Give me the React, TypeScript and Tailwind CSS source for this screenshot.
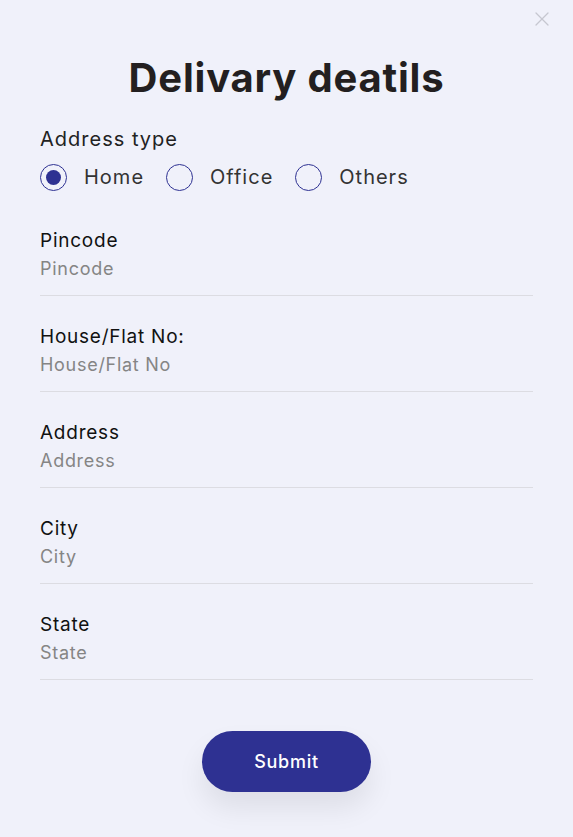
import { X } from "lucide-react";

const fields = [
  { label: "Pincode", placeholder: "Pincode" },
  { label: "House/Flat No:", placeholder: "House/Flat No" },
  { label: "Address", placeholder: "Address" },
  { label: "City", placeholder: "City" },
  { label: "State", placeholder: "State" },
];

const types = ["Home", "Office", "Others"];

export default function App() {
  return (
    <div
      className="relative min-h-[837px] w-full bg-[#f0f1fa] px-[40px] text-[#222]"
      style={{ fontFamily: "Inter, 'Noto Sans', sans-serif" }}
    >
      <button className="absolute right-[19px] top-[7px] text-[#c6c7d0]">
        <X size={24} strokeWidth={1.3} />
      </button>

      <h1 className="pt-[52px] text-center text-[40px] font-bold leading-[52px] tracking-[0.02em] text-[#231f20]">
        Delivary deatils
      </h1>

      <div className="mt-[21px] text-[20px] leading-[28px] tracking-[0.05em]">Address type</div>
      <div className="mt-[10px] flex items-center">
        {types.map((t, i) => (
          <label key={t} className="mr-[22px] flex items-center">
            <span className="flex h-[27px] w-[27px] items-center justify-center rounded-full border border-[#2e3192]">
              {i === 0 && <span className="h-[15px] w-[15px] rounded-full bg-[#2e3192]" />}
            </span>
            <span className="ml-[17px] text-[20px] leading-[28px] tracking-[0.05em] text-[#333]">{t}</span>
          </label>
        ))}
      </div>

      <div className="mt-[36px] flex flex-col">
        {fields.map((f) => (
          <div key={f.label} className="mb-[27px] border-b border-[#dcdce2] pb-[12px] last:mb-0">
            <div className="text-[19px] leading-[28px] tracking-[0.04em] text-[#111]">{f.label}</div>
            <div className="text-[18px] leading-[28px] tracking-[0.04em] text-[#858585]">{f.placeholder}</div>
          </div>
        ))}
      </div>

      <div className="mt-[51px] flex justify-center">
        <button className="h-[61px] w-[169px] rounded-full bg-[#2e3192] text-[18px] font-medium tracking-[0.04em] text-white shadow-[0_16px_28px_rgba(0,0,0,0.08)]">
          Submit
        </button>
      </div>
    </div>
  );
}
